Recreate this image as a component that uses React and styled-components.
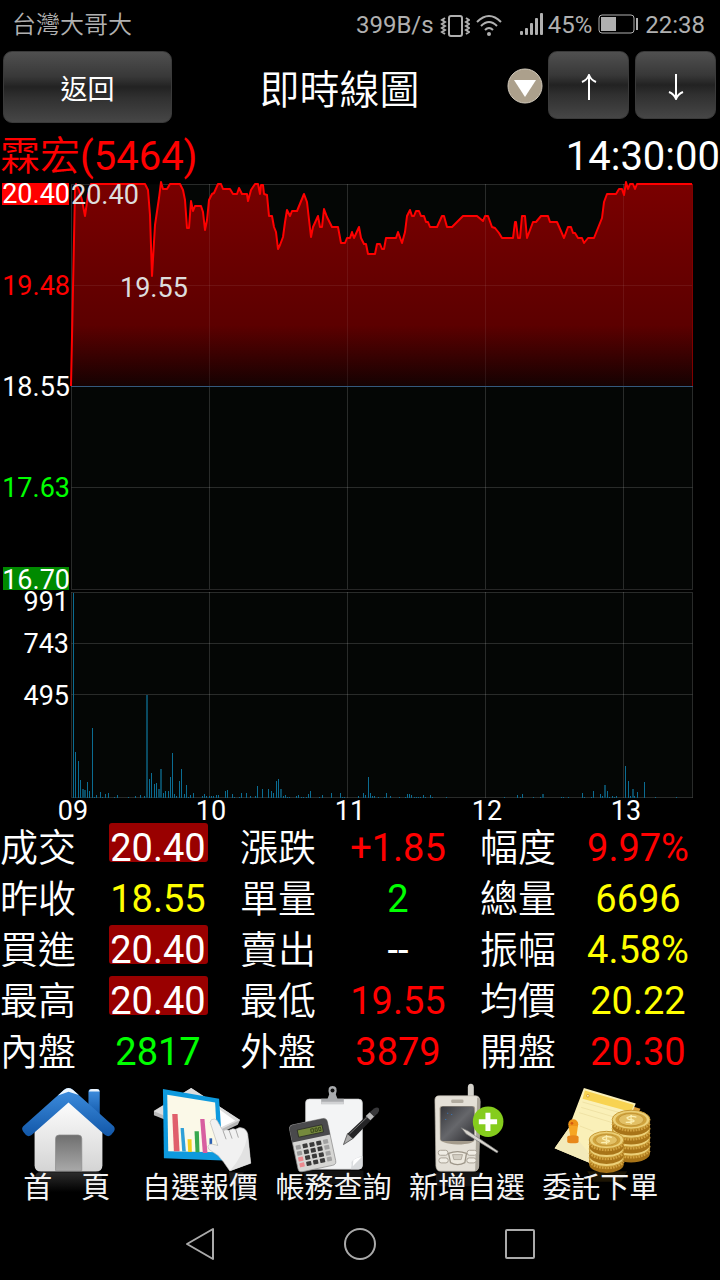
import React from "react";
import styled, { createGlobalStyle } from "styled-components";

const GlobalStyle = createGlobalStyle`
  * {
    box-sizing: border-box;
  }
  body {
    margin: 0;
    background: #000;
    color: #fff;
    font-family: Roboto, "Noto Sans CJK TC", sans-serif;
  }
  button {
    font-family: inherit;
    color: inherit;
    cursor: pointer;
  }
`;

const Page = styled.div`
  display: flex;
  flex-direction: column;
  min-height: 100vh;
  overflow: hidden;
`;

const StatusBar = styled.div`
  display: flex;
  align-items: center;
  justify-content: space-between;
  height: 51px;
  padding: 0 15px 0 12px;
  font-size: 24px;
  line-height: 51px;
  color: #b0b0b0;
`;

const Carrier = styled.span`
  font-weight: 350;
`;

const StatusIcons = styled.div`
  display: flex;
  align-items: center;
  gap: 6px;
`;

const Signal = styled.div`
  display: flex;
  align-items: center;
  gap: 4px;
  margin-left: 12px;
`;

const Header = styled.header`
  display: flex;
  align-items: flex-start;
  height: 78px;
  padding: 0 4px 0 3px;
`;

const GlossButton = styled.button`
  display: flex;
  align-items: center;
  justify-content: center;
  flex: none;
  width: ${(p) => (p.$wide ? 169 : 81)}px;
  height: ${(p) => (p.$wide ? 72 : 68)}px;
  padding: ${(p) => (p.$wide ? 0 : 4)}px 0 0;
  border: 1px solid #3a3a3a;
  border-radius: 9px;
  background: linear-gradient(#505050, #383838 35%, #222 50%, #303030 65%, #464646);
  font-size: 27px;
`;

const Title = styled.h1`
  flex: 1;
  margin: 0;
  font-size: 40px;
  font-weight: 350;
  line-height: 80px;
  text-align: center;
`;

const HeaderActions = styled.div`
  display: flex;
  gap: 6px;
`;

const DropButton = styled.button`
  display: flex;
  flex: none;
  width: 36px;
  height: 70px;
  margin-right: 5px;
  padding: 0;
  border: 0;
  background: none;
  align-items: center;
`;

const StockRow = styled.div`
  display: flex;
  justify-content: space-between;
  height: 52px;
  font-size: 40px;
  line-height: 56px;
`;

const StockName = styled.h2`
  margin: 0;
  font-size: inherit;
  font-weight: 400;
  color: #f00;
`;

const Cjk = styled.span`
  font-weight: 350;
`;

const Chart = styled.svg`
  display: block;
  width: 100%;
  height: auto;
  overflow: visible;
  font-size: 27px;
`;

const QuoteTable = styled.table`
  width: 100%;
  margin-top: 2px;
  table-layout: fixed;
  border-collapse: collapse;
  font-size: 38px;
  line-height: 51px;
`;

const Label = styled.th`
  width: 76px;
  padding: 0;
  font-weight: 350;
  text-align: left;
  white-space: nowrap;
`;

const Value = styled.td`
  padding: 0;
  color: ${(p) => p.$color};
  text-align: center;
  vertical-align: top;
`;

const Badge = styled.span`
  display: block;
  width: 99px;
  height: 39px;
  margin: 0 auto;
  border-radius: 3px;
  background: #900;
  line-height: 50px;
`;

const Tabs = styled.nav`
  display: grid;
  grid-template-columns: repeat(5, 1fr);
  padding-right: 53px;
`;

const Tab = styled.a`
  display: flex;
  flex-direction: column;
  align-items: center;
  color: #f4f4f4;
  font-size: 29px;
  line-height: 28px;
  text-decoration: none;
  white-space: nowrap;
`;

const TabArt = styled.svg`
  display: block;
  width: 133px;
  height: 96px;
  overflow: visible;
`;

const TabLabel = styled.span`
  position: relative;
`;

const SystemBar = styled.div`
  display: flex;
  align-items: center;
  justify-content: center;
  gap: 112px;
  height: 72px;
  margin-top: auto;
`;

const SystemButton = styled.button`
  display: flex;
  align-items: center;
  justify-content: center;
  width: 48px;
  height: 48px;
  padding: 0;
  border: 0;
  background: none;
`;

const quotes = [
  [["成交", "20.40", "#fff", true], ["漲跌", "+1.85", "#f00"], ["幅度", "9.97%", "#f00"]],
  [["昨收", "18.55", "#ff0"], ["單量", "2", "#0f0"], ["總量", "6696", "#ff0"]],
  [["買進", "20.40", "#fff", true], ["賣出", "--", "#fff"], ["振幅", "4.58%", "#ff0"]],
  [["最高", "20.40", "#fff", true], ["最低", "19.55", "#f00"], ["均價", "20.22", "#ff0"]],
  [["內盤", "2817", "#0f0"], ["外盤", "3879", "#f00"], ["開盤", "20.30", "#f00"]],
];

const pricePoints =
  "71,386 75,190 76,184 79,190 82,200 85,216 88,195 91,184 145,184 148,190 150,215 152,276 155,225 159,198 161,182 163,189 167,189 170,184 180,184 183,190 185,200 187,228 189,228 191,201 193,211 195,206 201,206 203,212 205,230 207,220 209,200 212,194 214,193 218,184 221,184 223,189 230,189 233,194 237,194 239,188 242,194 247,194 248,201 251,190 255,184 258,184 260,194 261,185 263,185 264,194 267,195 269,216 272,216 274,227 276,232 278,249 280,245 283,237 285,222 287,210 290,216 292,211 297,211 304,194 307,202 311,237 313,227 318,216 320,227 322,227 324,209 327,217 332,227 338,227 341,243 345,243 347,238 350,238 352,232 354,238 359,227 361,238 364,244 366,244 368,254 375,254 377,244 380,244 382,249 384,249 386,238 396,238 398,232 402,243 405,232 407,216 410,210 412,216 414,216 416,211 419,211 421,216 424,216 426,222 428,222 430,227 437,227 442,216 444,216 447,227 452,227 463,216 477,216 483,221 485,216 488,216 492,227 495,228 499,233 502,238 513,238 515,222 516,222 518,238 520,238 522,216 525,216 527,238 533,222 536,222 541,216 548,216 550,222 557,222 564,238 568,227 571,227 573,233 575,233 578,238 582,238 584,243 588,238 594,238 602,218 604,202 607,194 616,194 619,189 622,189 624,195 626,182 628,189 630,184 633,184 635,189 637,184 692,184";

// [x, height]
const volumes = [
  [73, 205], [75, 46], [78, 37], [80, 18], [82, 9], [84, 8], [87, 16], [89, 7], [92, 70], [94, 1], [96, 3],
  [100, 6], [102, 1], [105, 4], [108, 5], [114, 1], [117, 3], [128, 1], [135, 2], [140, 3], [144, 2], [146, 103],
  [149, 19], [151, 25], [154, 14], [156, 15], [158, 9], [160, 29], [163, 5], [165, 7], [168, 7], [170, 21],
  [172, 45], [174, 4], [176, 2], [179, 17], [181, 29], [184, 4], [186, 13], [188, 1], [190, 3], [193, 5],
  [202, 2], [204, 4], [206, 2], [209, 2], [211, 2], [213, 2], [216, 3], [218, 3], [225, 7], [227, 8],
  [232, 4], [234, 1], [239, 1], [241, 5], [246, 5], [250, 2], [255, 2], [257, 12], [262, 9], [268, 9],
  [271, 7], [273, 5], [276, 17], [278, 19], [280, 9], [283, 2], [285, 3], [287, 1], [289, 1], [296, 2],
  [298, 3], [301, 1], [303, 1], [306, 1], [308, 4], [310, 7], [319, 1], [322, 3], [331, 5], [340, 5],
  [342, 1], [344, 1], [358, 2], [363, 5], [365, 3], [368, 21], [370, 5], [372, 2], [374, 2], [378, 1],
  [384, 1], [386, 5], [390, 2], [399, 1], [405, 1], [407, 4], [409, 4], [411, 3], [414, 1], [416, 1],
  [418, 1], [420, 1], [423, 3], [425, 1], [430, 3], [432, 1], [446, 1], [504, 1], [517, 3], [520, 1],
  [522, 4], [533, 1], [540, 1], [542, 4], [561, 1], [563, 1], [568, 1], [582, 5], [584, 1], [591, 1],
  [593, 7], [600, 4], [602, 2], [604, 13], [607, 7], [609, 1], [612, 2], [614, 1], [616, 2], [625, 32],
  [628, 17], [630, 2], [632, 9], [634, 2], [637, 6], [644, 16], [655, 1], [676, 1],
];

const wideBars = [82, 84, 146, 158, 160, 280, 542, 604, 632];

const hours = [
  [73, "09"],
  [211, "10"],
  [350, "11"],
  [487, "12"],
  [626, "13"],
];

function TrendChart() {
  return (
    <Chart viewBox="0 181 720 640" role="img" aria-label="即時線圖">
      <defs>
        <linearGradient id="area" x1="0" y1="184" x2="0" y2="386" gradientUnits="userSpaceOnUse">
          <stop offset="0" stopColor="#7a0000" />
          <stop offset="0.7" stopColor="#5c0000" />
          <stop offset="1" stopColor="#150202" />
        </linearGradient>
      </defs>
      <rect x="71" y="184" width="622" height="405" fill="#040605" />
      <rect x="71" y="592" width="622" height="206" fill="#040605" />
      <polygon points={`${pricePoints} 692,386`} fill="url(#area)" />
      <g stroke="#fff" strokeOpacity="0.15" fill="none">
        <path d="M71.5 184.500V589.500H692.500V386" />
        <path d="M71.500 184.500H145M163 184.500H218M262 184.500H625" />
        <path d="M71.500 487.500H692.500M71.500 592.500H692.500V798M71.500 643.500H692.500M71.500 694.500H692.500M71.500 592V797.500H692.500" />
        <path d="M209.500 386V589M347.500 386V589M485.500 386V589M623.500 386V589" />
        <path d="M209.500 592V798M347.500 592V798M485.500 592V798M623.500 592V798" />
        <path d="M209.500 184V200M347.500 184V238M485.500 184V216M623.500 184V190" />
      </g>
      <path
        d="M209.500 200V386M347.500 238V386M485.500 216V386M623.500 190V386M72 285.500H692"
        stroke="#fff"
        strokeOpacity="0.07"
      />
      <path d="M692.500 184V386" stroke="#800000" />
      <path d="M71 386.500H693" stroke="#34597c" />
      <polyline points={pricePoints} fill="none" stroke="#f00" strokeWidth="2" strokeLinejoin="round" />
      {volumes.map(([x, h]) => {
        const wide = wideBars.includes(x);
        return <rect key={x} x={x} y={798 - h} width={wide ? 2 : 1} height={h} fill={wide ? "#0a4a62" : "#0b6c92"} />;
      })}
      <rect x="2" y="183" width="67" height="22" fill="#f00" />
      <rect x="3" y="567" width="66" height="23" fill="#008a00" />
      <g fill="#fff" textAnchor="end">
        <text x="70" y="203">20.40</text>
        <text x="70" y="295" fill="#f00">19.48</text>
        <text x="70" y="396">18.55</text>
        <text x="70" y="497" fill="#0f0">17.63</text>
        <text x="70" y="589">16.70</text>
        <text x="69" y="611">991</text>
        <text x="69" y="653">743</text>
        <text x="69" y="705">495</text>
      </g>
      <g fill="#ddd">
        <text x="71" y="204">20.40</text>
        <text x="120" y="297">19.55</text>
      </g>
      <g fill="#fff" textAnchor="middle">
        {hours.map(([x, label]) => (
          <text key={label} x={x} y="820">{label}</text>
        ))}
      </g>
    </Chart>
  );
}

function HomeArt() {
  return (
    <TabArt viewBox="0 6 400 288" aria-hidden="true">
      <defs>
        <linearGradient id="roof" x1="0" y1="0" x2="0" y2="1">
          <stop offset="0" stopColor="#3f8fe0" />
          <stop offset="1" stopColor="#1257a8" />
        </linearGradient>
        <linearGradient id="wall" x1="0" y1="0" x2="0" y2="1">
          <stop offset="0" stopColor="#fff" />
          <stop offset="1" stopColor="#d4d4d4" />
        </linearGradient>
        <linearGradient id="door" x1="0" y1="0" x2="0" y2="1">
          <stop offset="0" stopColor="#6f6f6f" />
          <stop offset="1" stopColor="#a8a8a8" />
        </linearGradient>
        <linearGradient id="shade" x1="0" y1="0" x2="0" y2="1">
          <stop offset="0" stopColor="#2c2c2c" />
          <stop offset="1" stopColor="#000" />
        </linearGradient>
      </defs>
      <rect x="106" y="289" width="200" height="60" rx="14" fill="url(#shade)" />
      <path d="M266 48Q266 39 275 39H291Q300 39 300 48V122L266 95Z" fill="url(#roof)" />
      <path d="M267 46Q270 39 276 39H291Q298 39 300 46Z" fill="#eaf3fc" />
      <path d="M104 150L206 64L308 150V268Q308 287 288 287H124Q104 287 104 268Z" fill="url(#wall)" />
      <path d="M167 284V188Q167 177 178 177H235Q246 177 246 188V284Z" fill="url(#door)" stroke="#8a8a8a" strokeWidth="2" />
      <path d="M206 36Q214 36 220 42L342 151Q348 159 342 167L334 177Q326 184 316 177L206 79L95 177Q86 184 78 177L70 167Q63 158 70 151L192 42Q199 36 206 36Z" fill="url(#roof)" />
      <path d="M206 36Q213 36 219 41L237 57L206 47L174 58L192 42Q199 36 206 36Z" fill="#eef6fd" />
    </TabArt>
  );
}

function QuoteArt() {
  return (
    <TabArt viewBox="0 6 400 288" aria-hidden="true">
      <path d="M285 289H330L318 330H292Z" fill="#1c1c1c" />
      <path d="M172 36L319 132L312 146L230 185L60 118V104Z" fill="#b9b9b9" />
      <path d="M172 36L319 132L230 176L60 106Z" fill="#dcdcdc" />
      <path d="M250 95L304 134L262 154Z" fill="#fff" />
      <path d="M87 39L256 68L268 254L90 247Z" fill="#0e9ade" />
      <path d="M100 56L244 79L252 229L103 226Z" fill="#fbf9e8" />
      <path d="M115 114H131L137 226H120Z" fill="#e0606c" />
      <path d="M140 156H150L156 227H145Z" fill="#2fa0d8" />
      <path d="M161 190H173L174 228H163Z" fill="#f3cf1e" />
      <path d="M182 166H195L197 229H185Z" fill="#36a84e" />
      <path d="M199 129H212L221 231H207Z" fill="#d85fa0" />
      <path d="M227 187H235V204H227Z" fill="#2d62b4" />
      <path d="M229 139Q230 128 242 129Q250 130 254 141L268 165Q276 158 286 163Q297 155 306 160Q317 152 325 156Q337 158 342 174L351 262L288 285Q270 257 253 239L225 220Q219 211 226 206Q234 203 246 207L252 209Z" fill="#f1f1f1" stroke="#bdbdbd" strokeWidth="2" />
      <path d="M268 165L277 190M286 163L295 188M306 160L314 185" stroke="#aaa" strokeWidth="3" fill="none" />
      <path d="M342 178L351 262L288 285Q330 240 342 178Z" fill="#e2e2e2" />
    </TabArt>
  );
}

function AccountArt() {
  const keys = [];
  for (let r = 0; r < 4; r++) {
    for (let c = 0; c < 5; c++) {
      let fill = "#3a3a3a";
      if (c === 0) fill = r > 1 ? "#ec8a90" : "#9a9a9a";
      if (c === 4) fill = "#a2a2a2";
      keys.push(<rect key={`${r}${c}`} x={79 + c * 21} y={211 + r * 18} width="15" height="13" rx="2" fill={fill} />);
    }
  }
  return (
    <TabArt viewBox="0 6 400 288" aria-hidden="true">
      <rect x="110" y="284" width="180" height="40" fill="#111" />
      <path d="M116 80Q116 69 128 69H275Q287 69 287 81V268Q287 280 275 280H128Q116 280 116 268Z" fill="#f3f4f5" stroke="#c6c6c6" strokeWidth="2" />
      <path d="M287 240V268Q287 280 275 280H252Q256 268 254 258Q262 246 287 240Z" fill="#dadcde" />
      <path d="M260 252Q274 242 285 243L258 271Z" fill="#fff" />
      <path d="M163 68H182L187 55Q180 30 197 30Q215 30 207 55L212 68H231V84H163Z" fill="#a9abae" />
      <path d="M163 77H231V85H163Z" fill="#d1d2d4" />
      <circle cx="197" cy="43" r="6" fill="#111" />
      <g transform="translate(-4 0) rotate(-12 76 160)">
        <rect x="72" y="148" width="116" height="144" rx="12" fill="#d6d6d4" stroke="#888" strokeWidth="2" />
        <path d="M72 200V162Q72 148 86 148H174Q188 148 188 162V200Z" fill="#4a4a4c" />
        <rect x="94" y="166" width="76" height="22" fill="#75893d" stroke="#222" strokeWidth="2" />
        <path d="M134 172H142V182H134ZM147 172H153V182H147ZM158 172H164V182H158Z" stroke="#25310f" strokeWidth="2" fill="none" />
        {keys}
      </g>
      <path d="M230 206L242 173L258 188Z" fill="#aaa" stroke="#333" strokeWidth="2" />
      <path d="M242 173L309 110L323 122L259 188Z" fill="#242426" />
      <path d="M297 120L309 109L323 121L311 133Z" fill="#bbb" />
      <path d="M309 109L322 97Q333 92 337 98Q339 105 333 112L322 122Z" fill="#38383a" />
      <path d="M248 174L302 123" stroke="#777" strokeWidth="3" />
    </TabArt>
  );
}

function WatchArt() {
  return (
    <TabArt viewBox="0 6 400 288" aria-hidden="true">
      <defs>
        <linearGradient id="screen" x1="0" y1="0" x2="1" y2="1">
          <stop offset="0" stopColor="#34353a" />
          <stop offset="0.5" stopColor="#66676b" />
          <stop offset="1" stopColor="#2c2c30" />
        </linearGradient>
      </defs>
      <rect x="108" y="289" width="132" height="42" fill="#131313" />
      <path d="M204 66V34Q204 23 213 23Q222 23 222 34V70Z" fill="#d4d2cb" />
      <path d="M105 72Q105 59 118 59H228Q241 61 241 76L237 270Q236 286 222 286H122Q109 286 108 270Z" fill="#e4e0d7" stroke="#b6b1a6" strokeWidth="2" />
      <path d="M232 64Q241 66 241 76L237 270Q236 284 226 286Z" fill="#aba69b" />
      <rect x="154" y="70" width="37" height="11" rx="4" fill="#b2aca0" />
      <path d="M119 96Q120 90 127 90H219Q226 90 226 98L224 192Q222 204 173 206Q121 202 120 190Z" fill="#a49b8c" />
      <rect x="122" y="91" width="101" height="104" rx="7" fill="url(#screen)" />
      <path d="M142 110h3v3h-3zM154 114h3v3h-3zM136 129h3v3h-3z" fill="#3578c0" />
      <path d="M146 232Q173 222 200 232L195 260Q173 272 152 260Z" fill="#ede9df" stroke="#9d9689" strokeWidth="4" />
      <path d="M158 236H188L184 251H162Z" fill="#d3cec3" stroke="#9d9689" strokeWidth="2" />
      <g fill="#f0ede5" stroke="#aaa397" strokeWidth="3">
        <rect x="115" y="223" width="29" height="15" rx="7" />
        <rect x="202" y="223" width="29" height="15" rx="7" />
        <rect x="117" y="246" width="28" height="15" rx="7" />
        <rect x="201" y="246" width="28" height="15" rx="7" />
      </g>
      <circle cx="265" cy="137" r="46" fill="#85cc1d" />
      <path d="M257 110H272V130H292V145H272V165H257V145H237V130H257Z" fill="#fff" />
      <path d="M184 155L205 165L295 226L292 231L199 174Z" fill="#d9d6cf" stroke="#777" strokeWidth="2" />
    </TabArt>
  );
}

function CoinStack({ x, y, count, rx }) {
  const ry = rx / 2;
  const step = 27;
  const coins = [];
  for (let i = count - 1; i >= 0; i--) {
    const cy = y + i * step;
    coins.push(
      <g key={i}>
        <path d={`M${x - rx} ${cy}V${cy + 19}A${rx} ${ry} 0 0 0 ${x + rx} ${cy + 19}V${cy}Z`} fill="#a87418" />
        <path
          d={`M${x - rx + 3} ${cy + 10}A${rx} ${ry} 0 0 0 ${x + rx - 3} ${cy + 10}`}
          stroke="#d3a340"
          strokeWidth="13"
          strokeDasharray="5 3"
          fill="none"
        />
        <ellipse cx={x} cy={cy} rx={rx} ry={ry} fill="#ecd078" stroke="#c79a35" strokeWidth="3" />
      </g>
    );
  }
  return (
    <g>
      {coins}
      <ellipse cx={x} cy={y} rx={rx - 10} ry={ry - 6} fill="#cfa23c" />
      <ellipse cx={x} cy={y} rx={rx - 19} ry={ry - 10} fill="#e2c065" stroke="#b98a2a" strokeWidth="2" />
      <path
        d={`M${x + 16} ${y - 8}Q${x} ${y - 13} ${x - 12} ${y - 6}Q${x - 12} ${y} ${x + 6} ${y + 1}Q${x + 18} ${y + 7} ${x - 16} ${y + 8}M${x} ${y - 14}V${y + 13}`}
        fill="none"
        stroke="#fbeeb0"
        strokeWidth="4"
      />
    </g>
  );
}

function OrderArt() {
  return (
    <TabArt viewBox="0 6 400 288" aria-hidden="true">
      <path d="M160 286H280L262 318H180Z" fill="#1d1504" />
      <path d="M292 90L320 98L314 112L288 110Z" fill="#e0a13a" />
      <path d="M150 36L306 82L262 190L230 268L170 262L62 217L104 157Z" fill="#faf0b8" />
      <path d="M153 43L300 86L292 108L146 68Z" fill="#f8d351" />
      <circle cx="162" cy="59" r="4" fill="#fff3c0" stroke="#c98b1a" strokeWidth="2" />
      <path d="M146 78L258 110M142 94L238 122M136 110L236 140M138 150L180 166" stroke="#eadb9c" strokeWidth="2" />
      <path d="M104 157L62 217L170 262L172 240Z" fill="#f3eaba" />
      <CoinStack x={292} y={131} count={4} rx={57} />
      <CoinStack x={218} y={192} count={3} rx={52} />
      <ellipse cx="118" cy="145" rx="15" ry="15" fill="#ee9417" />
      <path d="M104 150H132L128 180H109Z" fill="#f6a623" />
      <path d="M100 184Q100 178 118 178Q134 178 134 184V197Q134 202 118 202Q100 202 100 197Z" fill="#e8871a" />
      <circle cx="114" cy="142" r="4" fill="#d45a10" />
    </TabArt>
  );
}

const tabs = [
  { title: "首　頁", Art: HomeArt },
  { title: "自選報價", Art: QuoteArt },
  { title: "帳務查詢", Art: AccountArt },
  { title: "新增自選", Art: WatchArt },
  { title: "委託下單", Art: OrderArt },
];

function PhoneStatus() {
  return (
    <StatusBar>
      <Carrier>台灣大哥大</Carrier>
      <StatusIcons>
        <span>399B/s</span>
        <svg width="30" height="24" viewBox="0 0 30 24" fill="none" stroke="#b0b0b0" strokeWidth="2">
          <rect x="9" y="2" width="13" height="20" rx="2" />
          <path d="M5 4L2 6L5 8L2 10L5 12L2 14L5 16L2 18L5 20M26 4L29 6L26 8L29 10L26 12L29 14L26 16L29 18L26 20" />
        </svg>
        <svg width="26" height="24" viewBox="0 0 26 24" fill="none" stroke="#b0b0b0" strokeWidth="2">
          <path d="M1 8Q13 -4 25 8M5 12Q13 4 21 12M9 16Q13 12 17 16" />
          <circle cx="13" cy="20" r="2" fill="#b0b0b0" stroke="none" />
        </svg>
        <Signal>
          <svg width="24" height="28" viewBox="0 0 24 28" fill="#b0b0b0">
            <rect x="0" y="19" width="3" height="4" rx="1" />
            <rect x="5" y="16" width="3" height="7" rx="1" />
            <rect x="10" y="11" width="3" height="12" rx="1" />
            <rect x="15" y="6" width="3" height="17" rx="1" />
            <rect x="20" y="1" width="3" height="22" rx="1" />
          </svg>
          <span>45%</span>
        </Signal>
        <svg width="41" height="24" viewBox="0 0 41 24">
          <rect x="1" y="1" width="35" height="18" rx="3" fill="none" stroke="#b0b0b0" />
          <rect x="3" y="3" width="15" height="14" fill="#b0b0b0" />
          <rect x="38" y="4" width="2" height="12" fill="#b0b0b0" />
        </svg>
        <span>22:38</span>
      </StatusIcons>
    </StatusBar>
  );
}

function App() {
  return (
    <Page>
      <GlobalStyle />
      <PhoneStatus />
      <Header>
        <GlossButton $wide>返回</GlossButton>
        <Title>即時線圖</Title>
        <DropButton aria-label="選單">
          <svg width="36" height="36" viewBox="0 0 36 36">
            <circle cx="18" cy="18" r="17" fill="#aca08c" stroke="#d0c8ba" strokeWidth="1" />
            <path d="M7 12H29L18 29Z" fill="#fff" />
          </svg>
        </DropButton>
        <HeaderActions>
          <GlossButton aria-label="上一檔">
            <svg width="16" height="26" viewBox="0 0 16 26" fill="none" stroke="#fff" strokeWidth="2">
              <path d="M8 26V2M1 8Q6 6 8 1Q10 6 15 8" />
            </svg>
          </GlossButton>
          <GlossButton aria-label="下一檔">
            <svg width="16" height="26" viewBox="0 0 16 26" fill="none" stroke="#fff" strokeWidth="2">
              <path d="M8 0V24M1 18Q6 20 8 25Q10 20 15 18" />
            </svg>
          </GlossButton>
        </HeaderActions>
      </Header>
      <StockRow>
        <StockName>
          <Cjk>霖宏</Cjk>(5464)
        </StockName>
        <span>14:30:00</span>
      </StockRow>
      <TrendChart />
      <QuoteTable>
        <tbody>
          {quotes.map((row) => (
            <tr key={row[0][0]}>
              {row.map(([label, value, color, hot]) => (
                <React.Fragment key={label}>
                  <Label scope="row">{label}</Label>
                  <Value $color={color}>{hot ? <Badge>{value}</Badge> : value}</Value>
                </React.Fragment>
              ))}
            </tr>
          ))}
        </tbody>
      </QuoteTable>
      <Tabs>
        {tabs.map(({ title, Art }) => (
          <Tab key={title} href="#">
            <Art />
            <TabLabel>{title}</TabLabel>
          </Tab>
        ))}
      </Tabs>
      <SystemBar>
        <SystemButton aria-label="Back">
          <svg width="32" height="34" viewBox="0 0 32 34" fill="none" stroke="#aaa" strokeWidth="2">
            <path d="M29 2V32L3 17Z" strokeLinejoin="round" />
          </svg>
        </SystemButton>
        <SystemButton aria-label="Home">
          <svg width="34" height="34" viewBox="0 0 34 34" fill="none" stroke="#aaa" strokeWidth="2">
            <circle cx="17" cy="17" r="15" />
          </svg>
        </SystemButton>
        <SystemButton aria-label="Recent">
          <svg width="30" height="30" viewBox="0 0 30 30" fill="none" stroke="#aaa" strokeWidth="2">
            <rect x="1" y="1" width="28" height="28" rx="1" />
          </svg>
        </SystemButton>
      </SystemBar>
    </Page>
  );
}

export default App;
